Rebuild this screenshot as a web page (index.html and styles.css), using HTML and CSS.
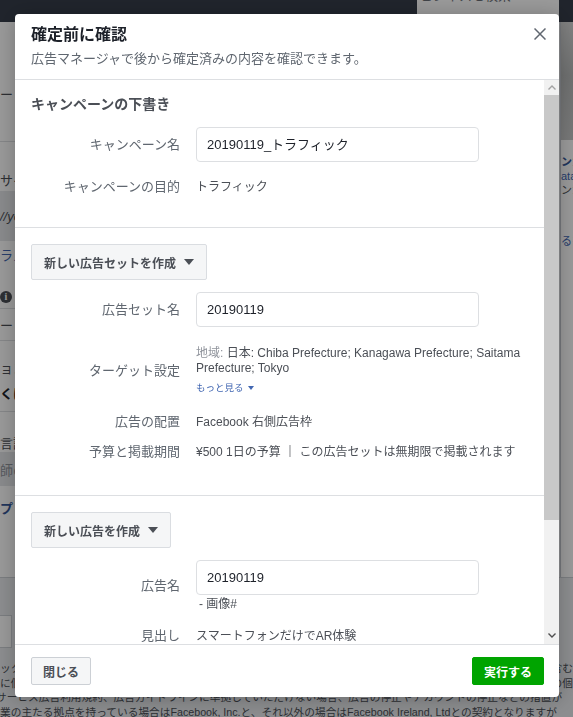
FILE: index.html
```html
<!DOCTYPE html>
<html lang="ja">
<head>
<meta charset="utf-8">
<title>確定前に確認</title>
<link rel="stylesheet" href="styles.css">
</head>
<body>
<div class="page">
  <div class="topbar"><div class="search">ビジネスを検索</div></div>
  <div class="main">
    <div class="lcol">
      <div class="lr h60"></div>
      <div class="lr h22">ートを設定</div>
      <div class="lr h38 bb"></div>
      <div class="lr h25"></div>
      <div class="lr h24">サイトのURL</div>
      <div class="lr h50 shade ital">//yourwebsite.com</div>
      <div class="lr h26 link">ラメーターを作成</div>
      <div class="lr h18"></div>
      <div class="lr h24 bb"><span class="info">i</span></div>
      <div class="lr h32 bb">ートの選択</div>
      <div class="lr h14"></div>
      <div class="lr h24">ョン</div>
      <div class="lr h26 strong">くはこちら</div>
      <div class="lr h7 bb"></div>
      <div class="lr h20"></div>
      <div class="lr h20">言語</div>
      <div class="lr h34 shade muted">師の言語</div>
      <div class="lr h9"></div>
      <div class="lr h24 link strong">プレビュー</div>
      <div class="lr fill"></div>
    </div>
    <div class="center"></div>
    <div class="rcol">
      <div class="photo"></div>
      <div class="rr h15"></div>
      <div class="rr h14 link strong">ンガイド</div>
      <div class="rr h14 link">atalog</div>
      <div class="rr h14">ンガイド</div>
      <div class="rr h38"></div>
      <div class="rr h14 link">るをもっと見る</div>
    </div>
  </div>
  <div class="bottom">
    <div class="bbox"></div>
    <div class="btext">
      <div class="bline split"><span>ックを入れると、お客様は以下の内容に同意したものとみなされます</span><span>を含む</span></div>
      <div class="bline split"><span>に個人情報の取り扱いについて</span><span>ための個</span></div>
      <div class="bline shift">サービス広告利用規約、広告ガイドラインに準拠していただけない場合、広告の停止やアカウントの停止などの措置が</div>
      <div class="bline">業の主たる拠点を持っている場合はFacebook, Inc.と、それ以外の場合はFacebook Ireland, Ltdとの契約となりますが</div>
    </div>
  </div>
</div>

<div class="overlay"></div>

<div class="modal">
  <div class="mhead">
    <div class="mtitles">
      <div class="mtitle">確定前に確認</div>
      <div class="msub">広告マネージャで後から確定済みの内容を確認できます。</div>
    </div>
    <button class="mclose" aria-label="閉じる">
      <svg width="12" height="12" viewBox="0 0 12 12"><path d="M0.5 0.5L11.5 11.5M11.5 0.5L0.5 11.5" stroke="#606770" stroke-width="1.5" fill="none"/></svg>
    </button>
  </div>

  <div class="mbody">
    <div class="mscroll">
      <section class="sec sec1">
        <div class="sec-title">キャンペーンの下書き</div>
        <div class="row r-first">
          <div class="lbl">キャンペーン名</div>
          <div class="val"><div class="input">20190119_トラフィック</div></div>
        </div>
        <div class="row r-obj">
          <div class="lbl">キャンペーンの目的</div>
          <div class="val">トラフィック</div>
        </div>
      </section>

      <section class="sec sec2">
        <button class="dd">新しい広告セットを作成<svg width="10" height="6" viewBox="0 0 10 6"><path d="M0 0H10L5 6Z" fill="#4b4f56"/></svg></button>
        <div class="row r-first">
          <div class="lbl">広告セット名</div>
          <div class="val"><div class="input">20190119</div></div>
        </div>
        <div class="row r-target">
          <div class="lbl">ターゲット設定</div>
          <div class="val target">
            <div class="tline"><span class="muted-k">地域:</span> 日本: Chiba Prefecture; Kanagawa Prefecture; Saitama</div>
            <div class="tline">Prefecture; Tokyo</div>
            <div class="more">もっと見る<svg width="6" height="4" viewBox="0 0 6 4"><path d="M0 0H6L3 4Z" fill="#4267b2"/></svg></div>
          </div>
        </div>
        <div class="row r-place">
          <div class="lbl">広告の配置</div>
          <div class="val">Facebook 右側広告枠</div>
        </div>
        <div class="row r-budget">
          <div class="lbl">予算と掲載期間</div>
          <div class="val">¥500 1日の予算 <span class="sep">｜</span> この広告セットは無期限で掲載されます</div>
        </div>
      </section>

      <section class="sec sec3">
        <button class="dd">新しい広告を作成<svg width="10" height="6" viewBox="0 0 10 6"><path d="M0 0H10L5 6Z" fill="#4b4f56"/></svg></button>
        <div class="row r-first">
          <div class="lbl">広告名</div>
          <div class="val">
            <div class="input">20190119</div>
            <div class="subtext">- 画像#</div>
          </div>
        </div>
        <div class="row r-head">
          <div class="lbl">見出し</div>
          <div class="val">スマートフォンだけでAR体験</div>
        </div>
      </section>
    </div>
    <div class="sbar">
      <div class="sbtn up"><svg width="8" height="5" viewBox="0 0 8 5"><path d="M0.5 4.5L4 1L7.5 4.5" stroke="#a3a3a3" stroke-width="1.4" fill="none"/></svg></div>
      <div class="sthumb"></div>
      <div class="strack"></div>
      <div class="sbtn down"><svg width="8" height="5" viewBox="0 0 8 5"><path d="M0.5 0.5L4 4L7.5 0.5" stroke="#505050" stroke-width="1.4" fill="none"/></svg></div>
    </div>
  </div>

  <div class="mfoot">
    <button class="fbtn">閉じる</button>
    <button class="fbtn primary">実行する</button>
  </div>
</div>
</body>
</html>
```

FILE: styles.css
```css
html, body {
  margin: 0;
  padding: 0;
}
body {
  width: 573px;
  height: 717px;
  overflow: hidden;
  font-family: "Liberation Sans", "Noto Sans CJK JP", sans-serif;
  color: #1d2129;
}

/* ---------- background page ---------- */
.page {
  height: 717px;
  display: flex;
  flex-direction: column;
  background: #e9ebee;
}
.topbar {
  height: 22px;
  flex-shrink: 0;
  background: #363d4a;
  display: flex;
}
.search {
  margin-left: 417px;
  margin-top: -11px;
  width: 142px;
  height: 29px;
  box-sizing: border-box;
  padding-left: 3px;
  background: #fff;
  font-size: 13px;
  line-height: 14px;
  color: #6b6f77;
  white-space: nowrap;
  overflow: hidden;
}
.main {
  height: 556px;
  flex-shrink: 0;
  box-sizing: border-box;
  display: grid;
  grid-template-columns: 200px 1fr 13px;
  border-bottom: 1px solid #ccd0d5;
}
.lcol {
  background: #fff;
  overflow: hidden;
  white-space: nowrap;
  font-size: 13px;
  color: #4b4f56;
  display: flex;
  flex-direction: column;
}
.lr {
  display: flex;
  align-items: center;
  flex-shrink: 0;
  box-sizing: content-box;
}
.lr.bb { border-bottom: 1px solid #dddfe2; }
.h7 { height: 6px; }
.h9 { height: 9px; }
.h14 { height: 14px; }
.h15 { height: 15px; }
.h18 { height: 18px; }
.h20 { height: 20px; }
.h22 { height: 22px; }
.h24 { height: 24px; }
.h25 { height: 25px; }
.h26 { height: 26px; }
.h32 { height: 31px; }
.h34 { height: 34px; }
.h38 { height: 37px; }
.h50 { height: 50px; }
.h60 { height: 60px; }
.lr.h24.bb { height: 23px; }
.lr.fill { flex: 1; }
.shade { background: #e4e6e9; }
.ital { font-style: italic; }
.link { color: #4267b2; }
.strong { font-weight: bold; color: #1d2129; }
.link.strong { color: #365899; }
.muted { color: #90949c; }
.info {
  display: inline-flex;
  width: 12px;
  height: 12px;
  border-radius: 50%;
  background: #4b4f56;
  color: #fff;
  font-size: 10px;
  font-weight: bold;
  align-items: center;
  justify-content: center;
  font-family: "Liberation Serif", serif;
}
.center { background: #e9ebee; }
.rcol {
  background: #fff;
  border-left: 1px solid #c4c8ce;
  overflow: hidden;
  white-space: nowrap;
  font-size: 11px;
  color: #4b4f56;
  display: flex;
  flex-direction: column;
}
.photo {
  height: 118px;
  flex-shrink: 0;
  background: linear-gradient(180deg, #d6d7d7 0%, #b9bbbb 45%, #c7c8c8 100%);
}
.rr {
  flex-shrink: 0;
  line-height: 14px;
}
.bottom {
  flex: 1;
  padding-top: 37px;
}
.bbox {
  width: 12px;
  height: 33px;
  box-sizing: border-box;
  background: #fff;
  border: 1px solid #ccd0d5;
  border-left: none;
}
.btext {
  margin-top: 13px;
  font-size: 10.7px;
  line-height: 14.5px;
  color: #4b4f56;
}
.bline {
  white-space: nowrap;
  overflow: hidden;
}
.bline.split {
  display: flex;
  justify-content: space-between;
}
.bline.shift { text-indent: -4px; }

.overlay {
  position: fixed;
  inset: 0;
  background: rgba(0, 0, 0, 0.4);
}

/* ---------- modal ---------- */
.modal {
  position: fixed;
  top: 14px;
  left: 15px;
  width: 544px;
  height: 683px;
  background: #fff;
  border-radius: 4px;
  overflow: hidden;
  display: flex;
  flex-direction: column;
  box-shadow: 0 2px 20px rgba(0, 0, 0, 0.25);
}
.mhead {
  height: 66px;
  flex-shrink: 0;
  box-sizing: border-box;
  border-bottom: 1px solid #dddfe2;
  display: flex;
  justify-content: space-between;
  padding: 11px 13px 0 16px;
}
.mtitle {
  font-size: 16px;
  line-height: 20px;
  font-weight: bold;
  color: #1d2129;
}
.msub {
  margin-top: 6px;
  font-size: 13px;
  line-height: 16px;
  color: #606770;
}
.mclose {
  border: 0;
  background: none;
  padding: 0;
  margin-top: 3px;
  width: 12px;
  height: 12px;
  display: flex;
  cursor: pointer;
}

.mbody {
  flex: 1;
  min-height: 0;
  display: flex;
}
.mscroll {
  flex: 1;
  overflow: hidden;
}
.sec {
  padding: 16px 16px 0 16px;
  border-bottom: 1px solid #dddfe2;
}
.sec1 { padding-top: 15px; padding-bottom: 32px; }
.sec2 { padding-bottom: 35px; }
.sec3 { border-bottom: none; }
.sec-title {
  font-size: 14px;
  line-height: 18px;
  font-weight: bold;
  color: #4b4f56;
}
.row {
  display: grid;
  grid-template-columns: 149px 1fr;
  column-gap: 16px;
  align-items: center;
}
.lbl {
  text-align: right;
  font-size: 13px;
  line-height: 16px;
  color: #606770;
  white-space: nowrap;
}
.val {
  font-size: 12px;
  line-height: 16px;
  color: #4b4f56;
  white-space: nowrap;
}
.sep {
  color: #1d2129;
  font-weight: bold;
}
.sec1 .r-first { margin-top: 14px; }
.r-first { margin-top: 12px; }
.r-obj { margin-top: 17px; }
.r-target { margin-top: 19px; }
.r-place { margin-top: 19px; }
.r-budget { margin-top: 14px; }
.r-head { margin-top: 16px; }

.input {
  width: 283px;
  height: 35px;
  box-sizing: border-box;
  border: 1px solid #dddfe2;
  border-radius: 4px;
  padding: 0 10px;
  display: flex;
  align-items: center;
  font-size: 13px;
  color: #1d2129;
}
.subtext {
  margin-top: 2px;
  padding-left: 3px;
  font-size: 12px;
  line-height: 15px;
  color: #4b4f56;
}
.tline {
  line-height: 15px;
}
.muted-k { color: #90949c; }
.more {
  margin-top: 5px;
  font-size: 9.5px;
  line-height: 14px;
  color: #4267b2;
  display: flex;
  align-items: center;
  gap: 4px;
}

.dd {
  display: inline-flex;
  align-items: center;
  gap: 8px;
  height: 36px;
  padding: 0 12px;
  box-sizing: border-box;
  border: 1px solid #dadde1;
  border-radius: 2px;
  background: #f5f6f7;
  font-family: inherit;
  font-size: 12px;
  font-weight: bold;
  color: #4b4f56;
  cursor: pointer;
}

/* fake scrollbar */
.sbar {
  width: 15px;
  flex-shrink: 0;
  display: flex;
  flex-direction: column;
  background: #f1f1f1;
}
.sbtn {
  display: flex;
  align-items: center;
  justify-content: center;
  flex-shrink: 0;
}
.sbtn.up { height: 15px; }
.sbtn.down { height: 17px; }
.sthumb {
  height: 425px;
  flex-shrink: 0;
  background: #c8c8c8;
}
.strack { flex: 1; }

.mfoot {
  height: 53px;
  flex-shrink: 0;
  box-sizing: border-box;
  border-top: 1px solid #dddfe2;
  padding: 12px 15px 0 16px;
  display: flex;
  justify-content: space-between;
  align-items: flex-start;
}
.fbtn {
  height: 28px;
  padding: 0 11px;
  box-sizing: border-box;
  border: 1px solid #ccd0d5;
  border-radius: 2px;
  background: #f5f6f7;
  font-family: inherit;
  font-size: 12px;
  font-weight: bold;
  color: #4b4f56;
  cursor: pointer;
}
.fbtn.primary {
  background: #00a400;
  border-color: #00a400;
  color: #fff;
}
```
